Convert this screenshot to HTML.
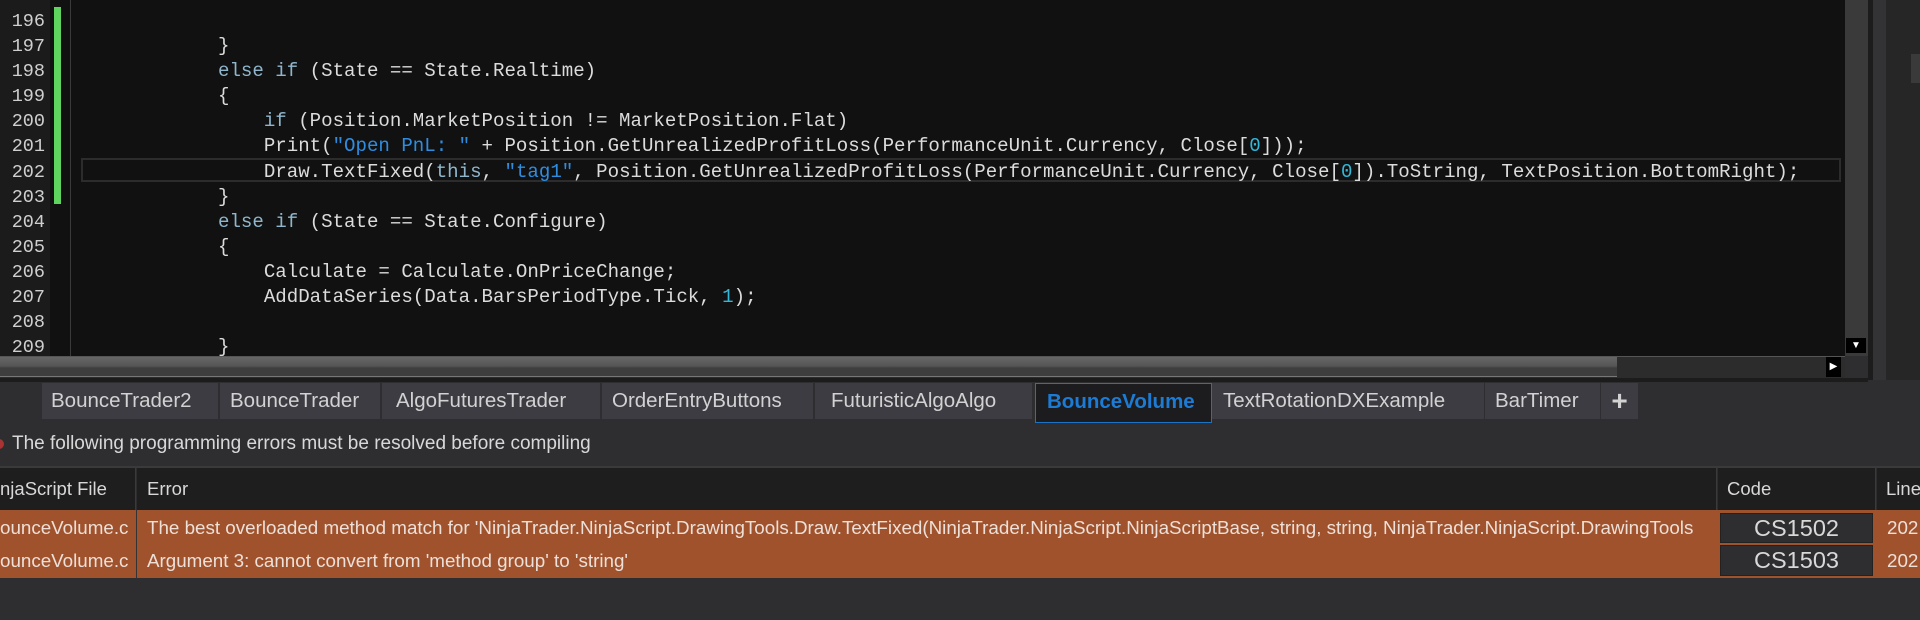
<!DOCTYPE html>
<html><head><meta charset="utf-8"><style>
*{margin:0;padding:0;box-sizing:border-box}
body{width:1920px;height:620px;background:#2e2e31;position:relative;overflow:hidden;font-family:"Liberation Sans",sans-serif}
.ed{position:absolute;left:0;top:0;width:1845px;height:356px;background:#111111;overflow:hidden}
.gut{position:absolute;left:0;top:0;width:50px;height:356px;background:#1b1b1b}
.green{position:absolute;left:54px;top:7px;width:7px;height:197px;background:#5ed35e}
.sep{position:absolute;left:70px;top:0;width:1px;height:356px;background:#3a3a3a}
.ln{position:absolute;width:45px;text-align:right;font-family:"Liberation Mono",monospace;font-size:18.5px;color:#cfcfcf;left:0}
.code{position:absolute;left:218px;font-family:"Liberation Mono",monospace;font-size:19.1px;color:#dcdcdc;white-space:pre}
.k{color:#8fb6cc}.s{color:#2f8de0}.n{color:#34b8d8}
.hl{position:absolute;left:81px;top:158px;width:1760px;height:24px;border:2px solid #2c2c2c}
.vs{position:absolute;left:1845px;top:0;width:23px;height:356px;background:#3a3a3a}
.hs{position:absolute;left:0;top:356px;width:1845px;height:22px;background:#2c2c2c;border-top:1px solid #555}
.tab{position:absolute;top:383px;height:36px;background:#3c3c42;color:#d2d2d2;font-size:20.5px;line-height:36px;padding-left:10px;white-space:nowrap}
.hdr{position:absolute;top:468px;height:42px;background:#1e1e1e;color:#d8d8d8;font-size:18.5px;line-height:42px;white-space:nowrap;overflow:hidden}
.row{position:absolute;left:0;width:1920px;height:33px;color:#ece0d8;font-size:18.8px;line-height:33px}
</style></head><body>
<div class="ed">
<div class="gut"></div>
<div class="green"></div>
<div class="sep"></div>
<div class="hl"></div>
<div class="ln" style="top:9px;line-height:25.1px">196<br>197<br>198<br>199<br>200<br>201<br>202<br>203<br>204<br>205<br>206<br>207<br>208<br>209</div>
<div class="code" style="top:9px;line-height:25.1px">
}
<span class="k">else if</span> (State == State.Realtime)
{
    <span class="k">if</span> (Position.MarketPosition != MarketPosition.Flat)
    Print(<span class="s">"Open PnL: "</span> + Position.GetUnrealizedProfitLoss(PerformanceUnit.Currency, Close[<span class="n">0</span>]));
    Draw.TextFixed(<span class="k">this</span>, <span class="s">"tag1"</span>, Position.GetUnrealizedProfitLoss(PerformanceUnit.Currency, Close[<span class="n">0</span>]).ToString, TextPosition.BottomRight);
}
<span class="k">else if</span> (State == State.Configure)
{
    Calculate = Calculate.OnPriceChange;
    AddDataSeries(Data.BarsPeriodType.Tick, <span class="n">1</span>);

}</div>
</div>
<div class="vs"><div style="position:absolute;left:1px;top:338px;width:20px;height:15px;background:#000;color:#fff;font-size:10px;text-align:center;line-height:15px">▼</div></div>
<div style="position:absolute;left:1868px;top:0;width:5px;height:380px;background:#1c1c1c"></div>
<div style="position:absolute;left:1873px;top:0;width:13px;height:380px;background:#333336"></div>
<div style="position:absolute;left:1886px;top:0;width:34px;height:380px;background:#262626"></div>
<div style="position:absolute;left:1911px;top:54px;width:9px;height:29px;background:#3a3a3a"></div>
<div class="hs"><div style="position:absolute;left:0;top:0;width:1617px;height:20px;background:linear-gradient(#666 0,#555 9px,#3e3e3e 11px,#3e3e3e 100%);border-bottom:1px solid #777"></div>
<div style="position:absolute;left:1826px;top:0;width:15px;height:20px;background:#000;color:#fff;font-size:10px;text-align:center;line-height:20px">▶</div></div>
<div style="position:absolute;left:0;top:378px;width:1868px;height:4px;background:#1c1c1c"></div>

<div class="tab" style="left:42px;width:176px;padding-left:9px">BounceTrader2</div>
<div class="tab" style="left:220px;width:160px">BounceTrader</div>
<div class="tab" style="left:382px;width:218px;padding-left:14px">AlgoFuturesTrader</div>
<div class="tab" style="left:602px;width:211px">OrderEntryButtons</div>
<div class="tab" style="left:815px;width:217px;padding-left:16px">FuturisticAlgoAlgo</div>
<div class="tab" style="left:1035px;width:177px;height:40px;background:#1c1c1e;border:1px solid #1a73c4;color:#1c7cd5;font-weight:bold;line-height:36px;padding-left:11px">BounceVolume</div>
<div class="tab" style="left:1212px;width:272px;padding-left:11px">TextRotationDXExample</div>
<div class="tab" style="left:1485px;width:115px;padding-left:10px">BarTimer</div>
<div class="tab" style="left:1601px;width:37px;padding-left:0;text-align:center;font-size:28px;font-weight:bold">+</div>

<div style="position:absolute;left:-6px;top:439px;width:10px;height:10px;border-radius:50%;background:#a33"></div>
<div style="position:absolute;left:12px;top:432px;color:#d8d8d8;font-size:19px;line-height:24px">The following programming errors must be resolved before compiling</div>

<div style="position:absolute;left:0;top:466px;width:1920px;height:2px;background:#3a3a3a"></div>
<div class="hdr" style="left:0;width:136px;border-right:1px solid #3a3a3a">njaScript File</div>
<div class="hdr" style="left:137px;width:1580px;padding-left:10px;border-right:1px solid #3a3a3a">Error</div>
<div class="hdr" style="left:1718px;width:158px;padding-left:9px;border-right:1px solid #3a3a3a">Code</div>
<div class="hdr" style="left:1877px;width:43px;padding-left:9px">Line</div>
<div style="position:absolute;left:0;top:510px;width:1920px;height:68px;background:#a0522d"></div>
<div style="position:absolute;left:136px;top:510px;width:1px;height:68px;background:#333"></div>
<div class="row" style="top:511px"><span style="position:absolute;left:0">ounceVolume.c</span><span style="position:absolute;left:147px;width:1562px;overflow:hidden;white-space:nowrap">The best overloaded method match for 'NinjaTrader.NinjaScript.DrawingTools.Draw.TextFixed(NinjaTrader.NinjaScript.NinjaScriptBase, string, string, NinjaTrader.NinjaScript.DrawingTools</span><span style="position:absolute;left:1887px">202</span></div>
<div class="row" style="top:544px"><span style="position:absolute;left:0">ounceVolume.c</span><span style="position:absolute;left:147px">Argument 3: cannot convert from 'method group' to 'string'</span><span style="position:absolute;left:1887px">202</span></div>
<div style="position:absolute;left:1719px;top:512px;width:155px;height:64px;background:#a0522d"></div>
<div style="position:absolute;left:1720px;top:513px;width:153px;height:30px;background:#2e2e31;border:1px solid #222;color:#d8d8d8;font-size:23.5px;text-align:center;line-height:28px">CS1502</div>
<div style="position:absolute;left:1720px;top:545px;width:153px;height:31px;background:#2e2e31;border:1px solid #222;color:#d8d8d8;font-size:23.5px;text-align:center;line-height:29px">CS1503</div>
</body></html>
